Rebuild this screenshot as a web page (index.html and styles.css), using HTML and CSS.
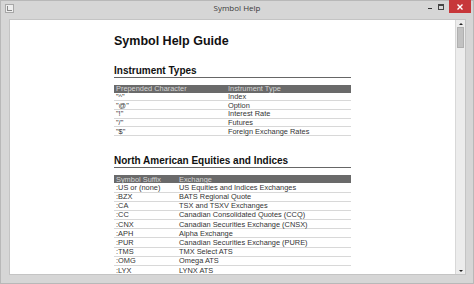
FILE: index.html
```html
<!DOCTYPE html>
<html>
<head>
<meta charset="utf-8">
<link rel="stylesheet" href="styles.css">
</head>
<body>
<div class="window">
  <div class="titlebar">
    <div class="appicon"><div class="appicon-in"></div></div>
    <div class="title">Symbol Help</div>
    <div class="controls">
      <div class="ctl min"><span></span></div>
      <div class="ctl max"><span></span></div>
      <div class="ctl close">
        <svg width="8" height="8" viewBox="0 0 8 8"><path d="M1.5 1.5L6.5 6.5M6.5 1.5L1.5 6.5" stroke="#fff" stroke-width="1.4"/></svg>
      </div>
    </div>
  </div>
  <div class="body">
    <div class="viewport">
      <div class="doc">
        <h1>Symbol Help Guide</h1>
        <h2>Instrument Types</h2>
        <table class="t1">
          <tr class="hd"><td class="c1">Prepended Character</td><td>Instrument Type</td></tr>
          <tr><td class="c1">"^"</td><td>Index</td></tr>
          <tr><td class="c1">"@"</td><td>Option</td></tr>
          <tr><td class="c1">"!"</td><td>Interest Rate</td></tr>
          <tr><td class="c1">"/"</td><td>Futures</td></tr>
          <tr><td class="c1">"$"</td><td>Foreign Exchange Rates</td></tr>
        </table>
        <h2 class="h2b">North American Equities and Indices</h2>
        <table class="t2">
          <tr class="hd"><td class="c1">Symbol Suffix</td><td>Exchange</td></tr>
          <tr><td class="c1">:US or (none)</td><td>US Equities and Indices Exchanges</td></tr>
          <tr><td class="c1">:BZX</td><td>BATS Regional Quote</td></tr>
          <tr><td class="c1">:CA</td><td>TSX and TSXV Exchanges</td></tr>
          <tr><td class="c1">:CC</td><td>Canadian Consolidated Quotes (CCQ)</td></tr>
          <tr><td class="c1">:CNX</td><td>Canadian Securities Exchange (CNSX)</td></tr>
          <tr><td class="c1">:APH</td><td>Alpha Exchange</td></tr>
          <tr><td class="c1">:PUR</td><td>Canadian Securities Exchange (PURE)</td></tr>
          <tr><td class="c1">:TMS</td><td>TMX Select ATS</td></tr>
          <tr><td class="c1">:OMG</td><td>Omega ATS</td></tr>
          <tr><td class="c1">:LYX</td><td>LYNX ATS</td></tr>
        </table>
      </div>
    </div>
    <div class="scrollbar">
      <div class="arrow up"></div>
      <div class="track"><div class="thumb"></div></div>
      <div class="arrow down"></div>
    </div>
  </div>
</div>
</body>
</html>
```
FILE: styles.css
```css
html, body {
  margin: 0;
  padding: 0;
  width: 474px;
  height: 284px;
  overflow: hidden;
  font-family: "Liberation Sans", Arial, sans-serif;
}
.window {
  width: 474px;
  height: 284px;
  box-sizing: border-box;
  background: #d6d6d6;
  border: 1px solid #b8b8b8;
  display: flex;
  flex-direction: column;
}
.titlebar {
  height: 18px;
  display: flex;
  align-items: flex-start;
  position: relative;
  flex: none;
}
.appicon {
  margin: 3px 0 0 4px;
  width: 9px;
  height: 9px;
  border: 1px solid #a8a8a8;
  background: #eeeeee;
  box-sizing: border-box;
  display: flex;
  justify-content: center;
  align-items: center;
}
.appicon-in {
  width: 4px;
  height: 4px;
  border-left: 1px solid #888;
  border-bottom: 1px solid #888;
}
.title {
  position: absolute;
  left: 0;
  right: 0;
  top: 1px;
  text-align: center;
  font-family: "Open Sans", "Liberation Sans", sans-serif;
  font-size: 8px;
  color: #3a3a3a;
}
.controls {
  margin-left: auto;
  margin-right: 2px;
  display: flex;
  align-items: flex-start;
  position: relative;
}
.ctl {
  width: 11px;
  height: 12px;
  display: flex;
  justify-content: center;
  align-items: center;
}
.min span {
  display: block;
  width: 4px;
  height: 1px;
  background: #333;
  margin-top: 3px;
}
.max span {
  display: block;
  width: 4px;
  height: 3px;
  border: 1px solid #444;
  border-top-width: 2px;
}
.close {
  width: 22px;
  height: 13px;
  background: #c7373a;
  margin-left: 3px;
  margin-top: -1px;
}
.body {
  flex: 1;
  display: flex;
  margin: 0 7px 8px 8px;
  background: #fff;
  border: 1px solid #c4c4c4;
  min-height: 0;
}
.viewport {
  flex: 1;
  overflow: hidden;
}
.doc {
  width: 237px;
  margin: 0 auto;
  padding-top: 14px;
  color: #222;
}
h1 {
  margin: 0;
  font-size: 12.5px;
  font-weight: bold;
  color: #111;
  line-height: 14px;
}
h2 {
  margin: 17px 0 0 0;
  font-size: 10px;
  font-weight: bold;
  color: #111;
  line-height: 11px;
  border-bottom: 1px solid #666;
  padding-bottom: 1px;
}
h2.h2b {
  margin-top: 19px;
}
table {
  border-collapse: collapse;
  width: 100%;
  margin-top: 7px;
  font-size: 7.4px;
}
td {
  padding: 0 0 0 2px;
  height: 7.7px;
  line-height: 7px;
  border-bottom: 1px solid #d8d8d8;
  color: #333;
  white-space: nowrap;
  vertical-align: middle;
}
.t2 td {
  height: 8.2px;
}
tr.hd td {
  background: #6a6a6a;
  color: #d6d6d6;
  border-bottom: none;
}
.t1 .c1 { width: 110px; }
.t2 .c1 { width: 61px; }
.scrollbar {
  width: 9px;
  flex: none;
  background: #ececec;
  border-left: 1px solid #d8d8d8;
  display: flex;
  flex-direction: column;
}
.arrow {
  height: 7px;
  flex: none;
  display: flex;
  justify-content: center;
  align-items: center;
}
.arrow::before {
  content: "";
  width: 0;
  height: 0;
  border-left: 2px solid transparent;
  border-right: 2px solid transparent;
}
.arrow.up::before { border-bottom: 2px solid #222; }
.arrow.down::before { border-top: 2px solid #222; }
.track {
  flex: 1;
}
.thumb {
  margin: 0 1px;
  height: 21px;
  background: #c2c2c2;
  border: 1px solid #b0b0b0;
  box-sizing: border-box;
}
```
